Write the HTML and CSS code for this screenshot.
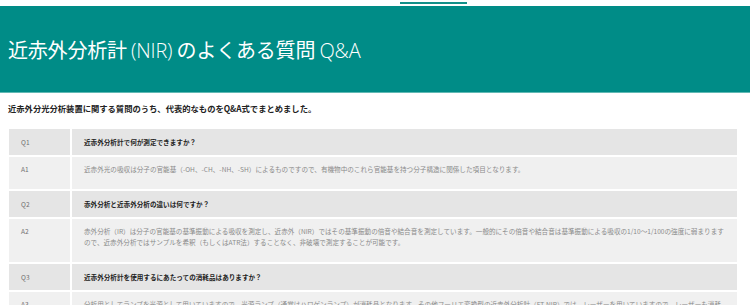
FILE: index.html
```html
<!DOCTYPE html>
<html lang="ja">
<head>
    <meta charset="UTF-8">
    <meta name="viewport" content="width=device-width, initial-scale=1.0">
    <title>近赤外分析計 (NIR) のよくある質問 Q&amp;A</title>
    <link rel="stylesheet" href="styles.css">
</head>
<body>
    <div class="topbar">
        <div class="tab"></div>
    </div>

    <header class="page-header">
        <h1>近赤外分析計 <span class="latin">(NIR)</span> のよくある質問 <span class="latin">Q&amp;A</span></h1>
    </header>

    <p class="intro">近赤外分光分析装置に関する質問のうち、代表的なものをQ&amp;A式でまとめました。</p>

    <table class="faq">
        <tr class="q-row">
            <td class="label">Q1</td>
            <td class="question">近赤外分析計で何が測定できますか？</td>
        </tr>
        <tr class="a-row">
            <td class="label">A1</td>
            <td class="answer">近赤外光の吸収は分子の官能基（-OH、-CH、-NH、-SH）によるものですので、有機物中のこれら官能基を持つ分子構造に関係した項目となります。</td>
        </tr>
        <tr class="q-row">
            <td class="label">Q2</td>
            <td class="question">赤外分析と近赤外分析の違いは何ですか？</td>
        </tr>
        <tr class="a-row">
            <td class="label">A2</td>
            <td class="answer">赤外分析（IR）は分子の官能基の基準振動による吸収を測定し、近赤外（NIR）ではその基準振動の倍音や結合音を測定しています。一般的にその倍音や結合音は基準振動による吸収の1/10～1/100の強度に弱まりますので、近赤外分析ではサンプルを希釈（もしくはATR法）することなく、非破壊で測定することが可能です。</td>
        </tr>
        <tr class="q-row">
            <td class="label">Q3</td>
            <td class="question">近赤外分析計を使用するにあたっての消耗品はありますか？</td>
        </tr>
        <tr class="a-row">
            <td class="label">A3</td>
            <td class="answer">分析用としてランプを光源として用いていますので、光源ランプ（通常はハロゲンランプ）が消耗品となります。その他フーリエ変換型の近赤外分析計（FT-NIR）では、レーザーを用いていますので、レーザーも消耗品となります。</td>
        </tr>
    </table>
</body>
</html>
```

FILE: styles.css
```css
body {
    margin: 0;
    font-family: "Noto Sans CJK JP", "Noto Sans", sans-serif;
    background: #fff;
    color: #333;
}
.topbar {
    height: 4px;
}
.tab {
    margin-left: 400px;
    margin-top: 2px;
    width: 67px;
    height: 2px;
    background-color: #12918a;
}
.page-header {
    height: 86px;
    background-color: #008c87;
    border-bottom: 1px solid #62b9b4;
    display: flex;
    align-items: center;
    padding-left: 8px;
}
.page-header h1 {
    margin: 0;
    color: #fff;
    font-size: 20px;
    font-weight: 400;
    letter-spacing: -0.2px;
}
.latin {
    font-family: "Open Sans", sans-serif;
    font-weight: 300;
}
.intro {
    margin: 9px 8px 0;
    font-size: 8.3px;
    font-weight: 700;
    color: #222;
    line-height: 12px;
}
.faq {
    margin: 13px 0 0 7px;
    width: 732px;
    border-collapse: collapse;
    font-size: 6.6px;
}
.faq td {
    border: 2px solid #fff;
    vertical-align: top;
    padding: 0 12px;
}
.faq td.label {
    width: 37px;
    color: #6f6f6f;
}
.q-row td {
    background-color: #e5e5e5;
    height: 26px;
    line-height: 10px;
    padding-top: 8px;
    padding-bottom: 8px;
    box-sizing: border-box;
}
.question {
    font-weight: 700;
    color: #222;
}
.a-row td {
    background-color: #f0f0f0;
    line-height: 11px;
    padding-top: 7px;
    padding-bottom: 14px;
    color: #8a8a8a;
}
```
